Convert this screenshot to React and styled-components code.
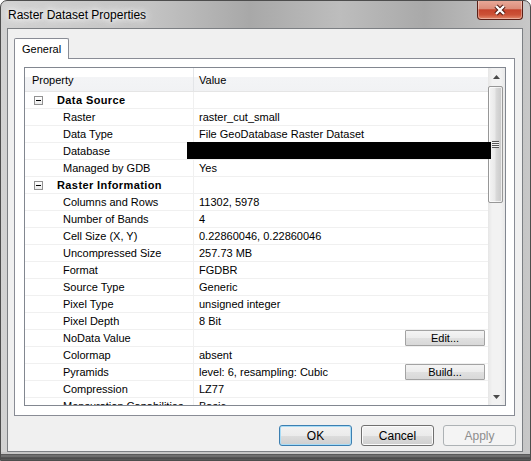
import React from "react";
import styled, { createGlobalStyle } from "styled-components";

const GlobalStyle = createGlobalStyle`
  html, body {
    margin: 0;
    padding: 0;
    background: #fff;
  }
  body {
    font-family: "Liberation Sans", Arial, sans-serif;
  }
  * {
    box-sizing: border-box;
  }
`;

const Window = styled.div`
  width: 531px;
  height: 461px;
  display: flex;
  flex-direction: column;
  padding: 0 7px 0 6px;
  border: 1px solid #4d4d4d;
  border-radius: 7px 7px 0 0;
  overflow: hidden;
  background:
    linear-gradient(
      to bottom,
      rgba(0, 0, 0, 0) calc(100% - 8px),
      #c6c6c6 calc(100% - 8px),
      #c6c6c6 calc(100% - 6px),
      #4e4e4e calc(100% - 6px),
      #7a7a7a calc(100% - 4px),
      #474747 calc(100% - 2px),
      #5e5e5e 100%
    ),
    linear-gradient(
      to right,
      #d2d2d2 0%,
      #c4c4c4 28%,
      #a8a8a8 47%,
      #bdbdbd 64%,
      #a9a9a9 80%,
      #c8c8c8 100%
    );
`;

const TitleBar = styled.div`
  height: 27px;
  flex: none;
  display: flex;
  align-items: center;
  padding-left: 1px;
`;

const Title = styled.span`
  font-size: 12px;
  color: #000;
  text-shadow: 0 0 8px #fff, 0 0 12px #fff, 0 0 4px rgba(255, 255, 255, 0.8);
`;

const CloseButton = styled.div`
  margin-left: auto;
  align-self: flex-start;
  margin-top: -1px;
  width: 46px;
  height: 20px;
  display: flex;
  align-items: center;
  justify-content: center;
  border: 1px solid #5a1f16;
  border-top: none;
  border-radius: 0 0 4px 4px;
  background: linear-gradient(
    to bottom,
    #e9ab9b 0%,
    #dc8e7b 45%,
    #c6442c 52%,
    #cc5237 78%,
    #e3896c 100%
  );
  box-shadow: inset 0 0 0 1px rgba(255, 255, 255, 0.35);
`;

const Client = styled.div`
  height: 424px;
  flex: none;
  display: flex;
  flex-direction: column;
  padding: 9px 6px 5px 6px;
  border: 1px solid #7c7f83;
  background: #f0f0f0;
`;

const TabStrip = styled.div`
  height: 20px;
  display: flex;
  align-items: flex-start;
`;

const Tab = styled.div`
  position: relative;
  z-index: 1;
  height: 21px;
  padding: 0 7px 0 7px;
  display: flex;
  align-items: center;
  font-size: 11px;
  color: #000;
  background: #fff;
  border: 1px solid #898c95;
  border-bottom: none;
  border-radius: 2px 2px 0 0;
`;

const Panel = styled.div`
  height: 358px;
  margin-right: 1px;
  padding: 8px 8px 9px 9px;
  border: 1px solid #898c95;
  background: #fff;
`;

const Grid = styled.div`
  position: relative;
  height: 339px;
  display: flex;
  border: 1px solid #828790;
  overflow: hidden;
  font-size: 11px;
  color: #000;
`;

const Sheet = styled.div`
  flex: 1;
  min-width: 0;
  display: flex;
  flex-direction: column;
`;

const HeaderRow = styled.div`
  height: 24px;
  flex: none;
  display: flex;
  border-bottom: 1px solid #e5e5e5;
  background: linear-gradient(to bottom, #fff 0, #fff 40%, #f3f4f6 40%, #f1f2f4 100%);
`;

const Row = styled.div`
  height: 17px;
  flex: none;
  display: flex;
  border-bottom: 1px solid #f0f0f0;
  line-height: 16px;
`;

const NameCell = styled.div`
  width: 169px;
  flex: none;
  display: flex;
  align-items: center;
  padding-left: ${(p) => p.$indent}px;
  border-right: 1px solid ${(p) => (p.$head ? "#e3e5e8" : "#f0f0f0")};
  font-weight: ${(p) => (p.$group ? "bold" : "normal")};
  letter-spacing: ${(p) => (p.$group ? "0.4px" : "0")};
  white-space: nowrap;
  overflow: hidden;
`;

const ValueCell = styled.div`
  flex: 1;
  min-width: 0;
  display: flex;
  align-items: center;
  padding-left: 5px;
  white-space: nowrap;
`;

const Expander = styled.span`
  position: relative;
  width: 9px;
  height: 9px;
  margin-right: 14px;
  flex: none;
  border: 1px solid #919191;
  background: linear-gradient(to bottom, #fff, #ececec);

  &::after {
    content: "";
    position: absolute;
    left: 1px;
    top: 3px;
    width: 5px;
    height: 1px;
    background: #000;
  }
`;

const CellButton = styled.div`
  margin-left: auto;
  margin-right: 3px;
  width: 80px;
  height: 16px;
  display: flex;
  align-items: center;
  justify-content: center;
  border: 1px solid #a3a3a3;
  border-radius: 1px;
  background: linear-gradient(to bottom, #f4f4f4 0%, #ececec 50%, #e0e0e0 51%, #d8d8d8 100%);
  font-size: 11px;
`;

const Redaction = styled.div`
  position: absolute;
  left: 162px;
  top: 74px;
  width: 304px;
  height: 17px;
  background: #000;
  z-index: 2;
`;

const ScrollBar = styled.div`
  width: 17px;
  flex: none;
  display: flex;
  flex-direction: column;
  background: linear-gradient(to right, #e6e6e6 0%, #f2f2f2 25%, #f2f2f2 75%, #e9e9e9 100%);
`;

const ArrowButton = styled.div`
  height: 17px;
  flex: none;
  display: flex;
  align-items: center;
  justify-content: center;
`;

const Track = styled.div`
  flex: 1;
  padding-top: 1px;
`;

const Thumb = styled.div`
  height: 117px;
  margin-right: 2px;
  display: flex;
  align-items: center;
  justify-content: center;
  border: 1px solid #979797;
  border-radius: 2px;
  background: linear-gradient(to right, #f4f4f4 0%, #e9e9e9 45%, #d9d9d9 55%, #c8c8c8 100%);
  box-shadow: inset 0 0 0 1px rgba(255, 255, 255, 0.7);
`;

const Grip = styled.span`
  width: 7px;
  height: 7px;
  background: repeating-linear-gradient(to bottom, #595959 0, #595959 1px, #f4f4f4 1px, #f4f4f4 2px);
`;

const ButtonRow = styled.div`
  margin-top: 9px;
  height: 21px;
  display: flex;
  justify-content: flex-end;
  gap: 9px;
`;

const DialogButton = styled.div`
  width: 73px;
  height: 21px;
  display: flex;
  align-items: center;
  justify-content: center;
  font-size: 12px;
  border-radius: 3px;
  color: ${(p) => (p.$disabled ? "#8d8d8d" : "#000")};
  border: 1px solid
    ${(p) => (p.$default ? "#3c7fb1" : p.$disabled ? "#adb2b5" : "#707070")};
  background: ${(p) =>
    p.$disabled
      ? "#f4f4f4"
      : "linear-gradient(to bottom, #f2f2f2 0%, #ebebeb 50%, #dddddd 51%, #cfcfcf 100%)"};
  box-shadow: inset 0 0 0 1px
    ${(p) => (p.$default ? "#a9dcf6" : p.$disabled ? "#f4f4f4" : "#fbfbfb")};
`;

const Arrow = ({ up }) => (
  <svg width="7" height="4" viewBox="0 0 7 4">
    <path d={up ? "M0 4 L3.5 0 L7 4 Z" : "M0 0 L7 0 L3.5 4 Z"} fill="#4a4a4a" />
  </svg>
);

const CloseGlyph = () => (
  <svg width="14" height="12" viewBox="0 0 14 12">
    <path d="M3 2 L11 10 M11 2 L3 10" stroke="#4e1a12" strokeWidth="4.4" />
    <path d="M3 2 L11 10 M11 2 L3 10" stroke="#fff" strokeWidth="2.4" />
  </svg>
);

const sections = [
  {
    title: "Data Source",
    rows: [
      ["Raster", "raster_cut_small"],
      ["Data Type", "File GeoDatabase Raster Dataset"],
      ["Database", ""],
      ["Managed by GDB", "Yes"],
    ],
  },
  {
    title: "Raster Information",
    rows: [
      ["Columns and Rows", "11302, 5978"],
      ["Number of Bands", "4"],
      ["Cell Size (X, Y)", "0.22860046, 0.22860046"],
      ["Uncompressed Size", "257.73 MB"],
      ["Format", "FGDBR"],
      ["Source Type", "Generic"],
      ["Pixel Type", "unsigned integer"],
      ["Pixel Depth", "8 Bit"],
      ["NoData Value", "", "Edit..."],
      ["Colormap", "absent"],
      ["Pyramids", "level: 6, resampling: Cubic", "Build..."],
      ["Compression", "LZ77"],
      ["Mensuration Capabilities", "Basic"],
    ],
  },
];

export default function App() {
  return (
    <>
      <GlobalStyle />
      <Window>
        <TitleBar>
          <Title>Raster Dataset Properties</Title>
          <CloseButton>
            <CloseGlyph />
          </CloseButton>
        </TitleBar>
        <Client>
          <TabStrip>
            <Tab>General</Tab>
          </TabStrip>
          <Panel>
            <Grid>
              <Sheet>
                <HeaderRow>
                  <NameCell $head $indent={7}>Property</NameCell>
                  <ValueCell>Value</ValueCell>
                </HeaderRow>
                {sections.map((section) => (
                  <React.Fragment key={section.title}>
                    <Row>
                      <NameCell $group $indent={9}>
                        <Expander />
                        {section.title}
                      </NameCell>
                      <ValueCell />
                    </Row>
                    {section.rows.map(([name, value, action]) => (
                      <Row key={name}>
                        <NameCell $indent={38}>{name}</NameCell>
                        <ValueCell>
                          {value}
                          {action && <CellButton>{action}</CellButton>}
                        </ValueCell>
                      </Row>
                    ))}
                  </React.Fragment>
                ))}
              </Sheet>
              <ScrollBar>
                <ArrowButton>
                  <Arrow up />
                </ArrowButton>
                <Track>
                  <Thumb>
                    <Grip />
                  </Thumb>
                </Track>
                <ArrowButton>
                  <Arrow />
                </ArrowButton>
              </ScrollBar>
              <Redaction />
            </Grid>
          </Panel>
          <ButtonRow>
            <DialogButton $default>OK</DialogButton>
            <DialogButton>Cancel</DialogButton>
            <DialogButton $disabled>Apply</DialogButton>
          </ButtonRow>
        </Client>
      </Window>
    </>
  );
}
